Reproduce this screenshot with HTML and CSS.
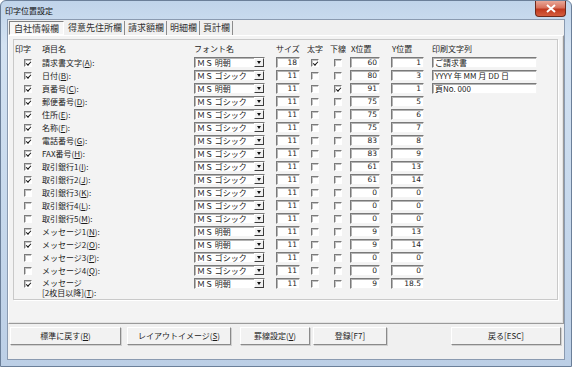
FILE: index.html
```html
<!doctype html>
<html lang="ja">
  <head>
    <meta charset="UTF-8" />
    <title>印字位置設定</title>
    <link rel="stylesheet" href="styles.css">
  </head>
  <body>
    <div class="window">
      <div class="titlebar">
        <span class="title">印字位置設定</span>
        <span class="close">
          <svg width="10" height="9" viewBox="0 0 10 9">
            <path d="M1 1 L9 8 M9 1 L1 8" stroke="#fff" stroke-width="2" />
          </svg>
        </span>
      </div>

      <div class="client">
        <div class="tabs">
          <span class="tab active">自社情報欄</span>
          <span class="tab">得意先住所欄</span>
          <span class="tab">請求額欄</span>
          <span class="tab">明細欄</span>
          <span class="tab">頁計欄</span>
        </div>

        <div class="panel">
          <div class="group">
            <div class="row head">
              <span class="h-print">印字</span>
              <span>項目名</span>
              <span>フォント名</span>
              <span>サイズ</span>
              <span class="h-bold">太字</span>
              <span class="h-under">下線</span>
              <span class="h-x">X位置</span>
              <span class="h-y">Y位置</span>
              <span>印刷文字列</span>
            </div>

            <div class="row">
              <span class="cb-cell"><span class="cb on"></span></span>
              <span class="label">請求書文字(<u>A</u>):</span>
              <span class="combo">ＭＳ 明朝<i></i></span>
              <span class="field num size">18</span>
              <span class="cb-cell bold"><span class="cb on"></span></span>
              <span class="cb-cell under"><span class="cb"></span></span>
              <span class="field num xpos">60</span>
              <span class="field num ypos">1</span>
              <span class="field text">ご請求書</span>
            </div>
            <div class="row">
              <span class="cb-cell"><span class="cb on"></span></span>
              <span class="label">日付(<u>B</u>):</span>
              <span class="combo">ＭＳ ゴシック<i></i></span>
              <span class="field num size">11</span>
              <span class="cb-cell bold"><span class="cb"></span></span>
              <span class="cb-cell under"><span class="cb"></span></span>
              <span class="field num xpos">80</span>
              <span class="field num ypos">3</span>
              <span class="field text">YYYY 年 MM 月 DD 日</span>
            </div>
            <div class="row">
              <span class="cb-cell"><span class="cb on"></span></span>
              <span class="label">頁番号(<u>C</u>):</span>
              <span class="combo">ＭＳ 明朝<i></i></span>
              <span class="field num size">11</span>
              <span class="cb-cell bold"><span class="cb"></span></span>
              <span class="cb-cell under"><span class="cb on"></span></span>
              <span class="field num xpos">91</span>
              <span class="field num ypos">1</span>
              <span class="field text">頁No. 000</span>
            </div>
            <div class="row">
              <span class="cb-cell"><span class="cb on"></span></span>
              <span class="label">郵便番号(<u>D</u>):</span>
              <span class="combo">ＭＳ ゴシック<i></i></span>
              <span class="field num size">11</span>
              <span class="cb-cell bold"><span class="cb"></span></span>
              <span class="cb-cell under"><span class="cb"></span></span>
              <span class="field num xpos">75</span>
              <span class="field num ypos">5</span>
            </div>
            <div class="row">
              <span class="cb-cell"><span class="cb on"></span></span>
              <span class="label">住所(<u>E</u>):</span>
              <span class="combo">ＭＳ ゴシック<i></i></span>
              <span class="field num size">11</span>
              <span class="cb-cell bold"><span class="cb"></span></span>
              <span class="cb-cell under"><span class="cb"></span></span>
              <span class="field num xpos">75</span>
              <span class="field num ypos">6</span>
            </div>
            <div class="row">
              <span class="cb-cell"><span class="cb on"></span></span>
              <span class="label">名称(<u>F</u>):</span>
              <span class="combo">ＭＳ ゴシック<i></i></span>
              <span class="field num size">11</span>
              <span class="cb-cell bold"><span class="cb"></span></span>
              <span class="cb-cell under"><span class="cb"></span></span>
              <span class="field num xpos">75</span>
              <span class="field num ypos">7</span>
            </div>
            <div class="row">
              <span class="cb-cell"><span class="cb on"></span></span>
              <span class="label">電話番号(<u>G</u>):</span>
              <span class="combo">ＭＳ ゴシック<i></i></span>
              <span class="field num size">11</span>
              <span class="cb-cell bold"><span class="cb"></span></span>
              <span class="cb-cell under"><span class="cb"></span></span>
              <span class="field num xpos">83</span>
              <span class="field num ypos">8</span>
            </div>
            <div class="row">
              <span class="cb-cell"><span class="cb on"></span></span>
              <span class="label">FAX番号(<u>H</u>):</span>
              <span class="combo">ＭＳ ゴシック<i></i></span>
              <span class="field num size">11</span>
              <span class="cb-cell bold"><span class="cb"></span></span>
              <span class="cb-cell under"><span class="cb"></span></span>
              <span class="field num xpos">83</span>
              <span class="field num ypos">9</span>
            </div>
            <div class="row">
              <span class="cb-cell"><span class="cb on"></span></span>
              <span class="label">取引銀行1(<u>I</u>):</span>
              <span class="combo">ＭＳ ゴシック<i></i></span>
              <span class="field num size">11</span>
              <span class="cb-cell bold"><span class="cb"></span></span>
              <span class="cb-cell under"><span class="cb"></span></span>
              <span class="field num xpos">61</span>
              <span class="field num ypos">13</span>
            </div>
            <div class="row">
              <span class="cb-cell"><span class="cb on"></span></span>
              <span class="label">取引銀行2(<u>J</u>):</span>
              <span class="combo">ＭＳ ゴシック<i></i></span>
              <span class="field num size">11</span>
              <span class="cb-cell bold"><span class="cb"></span></span>
              <span class="cb-cell under"><span class="cb"></span></span>
              <span class="field num xpos">61</span>
              <span class="field num ypos">14</span>
            </div>
            <div class="row">
              <span class="cb-cell"><span class="cb"></span></span>
              <span class="label">取引銀行3(<u>K</u>):</span>
              <span class="combo">ＭＳ ゴシック<i></i></span>
              <span class="field num size">11</span>
              <span class="cb-cell bold"><span class="cb"></span></span>
              <span class="cb-cell under"><span class="cb"></span></span>
              <span class="field num xpos">0</span>
              <span class="field num ypos">0</span>
            </div>
            <div class="row">
              <span class="cb-cell"><span class="cb"></span></span>
              <span class="label">取引銀行4(<u>L</u>):</span>
              <span class="combo">ＭＳ ゴシック<i></i></span>
              <span class="field num size">11</span>
              <span class="cb-cell bold"><span class="cb"></span></span>
              <span class="cb-cell under"><span class="cb"></span></span>
              <span class="field num xpos">0</span>
              <span class="field num ypos">0</span>
            </div>
            <div class="row">
              <span class="cb-cell"><span class="cb"></span></span>
              <span class="label">取引銀行5(<u>M</u>):</span>
              <span class="combo">ＭＳ ゴシック<i></i></span>
              <span class="field num size">11</span>
              <span class="cb-cell bold"><span class="cb"></span></span>
              <span class="cb-cell under"><span class="cb"></span></span>
              <span class="field num xpos">0</span>
              <span class="field num ypos">0</span>
            </div>
            <div class="row">
              <span class="cb-cell"><span class="cb on"></span></span>
              <span class="label">メッセージ1(<u>N</u>):</span>
              <span class="combo">ＭＳ 明朝<i></i></span>
              <span class="field num size">11</span>
              <span class="cb-cell bold"><span class="cb"></span></span>
              <span class="cb-cell under"><span class="cb"></span></span>
              <span class="field num xpos">9</span>
              <span class="field num ypos">13</span>
            </div>
            <div class="row">
              <span class="cb-cell"><span class="cb on"></span></span>
              <span class="label">メッセージ2(<u>O</u>):</span>
              <span class="combo">ＭＳ 明朝<i></i></span>
              <span class="field num size">11</span>
              <span class="cb-cell bold"><span class="cb"></span></span>
              <span class="cb-cell under"><span class="cb"></span></span>
              <span class="field num xpos">9</span>
              <span class="field num ypos">14</span>
            </div>
            <div class="row">
              <span class="cb-cell"><span class="cb"></span></span>
              <span class="label">メッセージ3(<u>P</u>):</span>
              <span class="combo">ＭＳ ゴシック<i></i></span>
              <span class="field num size">11</span>
              <span class="cb-cell bold"><span class="cb"></span></span>
              <span class="cb-cell under"><span class="cb"></span></span>
              <span class="field num xpos">0</span>
              <span class="field num ypos">0</span>
            </div>
            <div class="row">
              <span class="cb-cell"><span class="cb"></span></span>
              <span class="label">メッセージ4(<u>Q</u>):</span>
              <span class="combo">ＭＳ ゴシック<i></i></span>
              <span class="field num size">11</span>
              <span class="cb-cell bold"><span class="cb"></span></span>
              <span class="cb-cell under"><span class="cb"></span></span>
              <span class="field num xpos">0</span>
              <span class="field num ypos">0</span>
            </div>
            <div class="row tall">
              <span class="cb-cell"><span class="cb on"></span></span>
              <span class="label">メッセージ<br>[2枚目以降](<u>T</u>):</span>
              <span class="combo">ＭＳ 明朝<i></i></span>
              <span class="field num size">11</span>
              <span class="cb-cell bold"><span class="cb"></span></span>
              <span class="cb-cell under"><span class="cb"></span></span>
              <span class="field num xpos">9</span>
              <span class="field num ypos">18.5</span>
            </div>
          </div>
        </div>

        <div class="buttons">
          <span class="btn w-reset">標準に戻す(<u>R</u>)</span>
          <span class="btn w-layout">レイアウトイメージ(<u>S</u>)</span>
          <span class="btn w-rule">罫線設定(<u>V</u>)</span>
          <span class="btn w-save">登録[F7]</span>
          <span class="btn w-back">戻る[ESC]</span>
        </div>
      </div>
    </div>
  </body>
</html>
```

FILE: styles.css
```css
* {
  margin: 0;
  padding: 0;
  box-sizing: border-box;
}

body {
  width: 572px;
  height: 367px;
  overflow: hidden;
  font-family: "Noto Sans CJK JP", "DejaVu Sans", sans-serif;
  font-size: 8px;
  line-height: 10px;
  color: #1c1c1c;
  background: #fff;
}

u {
  text-decoration: underline;
  text-underline-offset: 1px;
}

/* window frame */
.window {
  width: 572px;
  height: 367px;
  display: flex;
  flex-direction: column;
  background: linear-gradient(180deg, #c0d4ea 0%, #d3e2f2 12%, #c6d8ec 60%, #bccfe6 100%);
  border: 1px solid #6b7f99;
  border-radius: 6px 6px 0 0;
  padding: 0 6px 6px;
}

.titlebar {
  height: 18px;
  display: flex;
  justify-content: space-between;
  align-items: flex-start;
}

.title {
  margin: 5px 0 0 -2px;
  font-size: 8px;
  color: #111;
}

.close {
  width: 31px;
  height: 16px;
  margin-right: -1px;
  display: flex;
  align-items: center;
  justify-content: center;
  background: linear-gradient(180deg, #e9a797 0%, #d8715c 45%, #c0391f 55%, #d55d3e 100%);
  border: 1px solid #6e2a1c;
  border-top: none;
  border-radius: 0 0 4px 4px;
}

.client {
  flex: 1;
  display: flex;
  flex-direction: column;
  background: #f0f0f0;
  border: 1px solid #8a9ab0;
}

/* tabs (flat button style) */
.tabs {
  height: 15px;
  display: flex;
  align-items: center;
  padding: 1px 0 0 1px;
  font-size: 9px;
  color: #333;
}

.tab {
  height: 14px;
  line-height: 13px;
  padding: 0 2px;
  border-right: 1px solid #8c8c8c;
  margin-right: 1px;
}

.tab.active {
  padding: 0 4px;
  border: 1px solid;
  border-color: #808080 #ffffff #ffffff #808080;
  background: #f6f6f6;
  margin-right: 2px;
}

.panel {
  height: 289px;
  border: 1px solid;
  border-color: #ffffff #9a9a9a #9a9a9a #ffffff;
  box-shadow: inset -1px -1px 0 #e3e3e3;
  background: #f3f3f3;
  padding: 3px 0 0 4px;
}

.group {
  width: 545px;
  height: 261px;
  border: 1px solid #c9c9c9;
  box-shadow: 1px 1px 0 #fff;
}

/* rows */
.row {
  height: 13px;
  display: grid;
  grid-template-columns: 28px 152px 82px 30px 23px 21px 41px 41px 1fr;
  align-items: center;
}

.row.head {
  height: 16px;
  padding-top: 2px;
}

.row.tall {
  height: 22px;
  align-items: start;
}

.h-print,
.h-bold,
.h-under,
.h-x,
.h-y {
  padding-left: 1px;
}

.label {
  white-space: nowrap;
}

.row.tall .label {
  padding-top: 1px;
}

.cb-cell {
  display: flex;
  align-items: center;
  height: 13px;
  padding-left: 10px;
}

.cb-cell.bold,
.cb-cell.under {
  padding-left: 5px;
}

.cb {
  width: 8px;
  height: 8px;
  background: #fff;
  border: 1px solid;
  border-color: #7a7a7a #ffffff #ffffff #7a7a7a;
  box-shadow: inset 1px 1px 0 #c4c4c4;
  position: relative;
}

.cb.on::after {
  content: "";
  position: absolute;
  left: 1px;
  top: 0;
  width: 4px;
  height: 2px;
  border-left: 1.5px solid #111;
  border-bottom: 1.5px solid #111;
  transform: rotate(-48deg) translate(-1px, 1px);
}

.combo,
.field {
  height: 11px;
  background: #fff;
  border: 1px solid;
  border-color: #7a7a7a #f4f4f4 #f4f4f4 #7a7a7a;
  box-shadow: inset 1px 1px 0 #b4b4b4;
  line-height: 9px;
  white-space: nowrap;
  overflow: hidden;
}

.row.tall .combo,
.row.tall .field {
  margin-top: 1px;
}

.combo {
  width: 71px;
  display: flex;
  align-items: center;
  padding-left: 2px;
  justify-content: space-between;
}

.combo i {
  width: 10px;
  height: 9px;
  background: #f0f0f0;
  border: 1px solid;
  border-color: #ffffff #3c3c3c #3c3c3c #ffffff;
  position: relative;
}

.combo i::after {
  content: "";
  position: absolute;
  left: 2px;
  top: 2px;
  border-left: 2.5px solid transparent;
  border-right: 2.5px solid transparent;
  border-top: 3px solid #111;
}

.field.num {
  text-align: right;
  padding-right: 2px;
  font-family: "DejaVu Sans", sans-serif;
  font-size: 7.5px;
}

.size {
  width: 24px;
}

.xpos {
  width: 30px;
}

.ypos {
  width: 33px;
}

.field.text {
  width: 105px;
  padding-left: 2px;
}

/* bottom buttons */
.buttons {
  display: flex;
  padding: 3px 3px 0 2px;
}

.btn {
  height: 18px;
  display: flex;
  align-items: center;
  justify-content: center;
  background: #f2f2f2;
  border: 1px solid;
  border-color: #ffffff #8a8a8a #8a8a8a #ffffff;
  box-shadow: 1px 1px 0 #d0d0d0;
}

.w-reset {
  width: 111px;
}

.w-layout {
  width: 104px;
  margin-left: 6px;
}

.w-rule {
  width: 70px;
  margin-left: 9px;
}

.w-save {
  width: 74px;
  margin-left: 3px;
}

.w-back {
  width: 110px;
  margin-left: auto;
}
```
